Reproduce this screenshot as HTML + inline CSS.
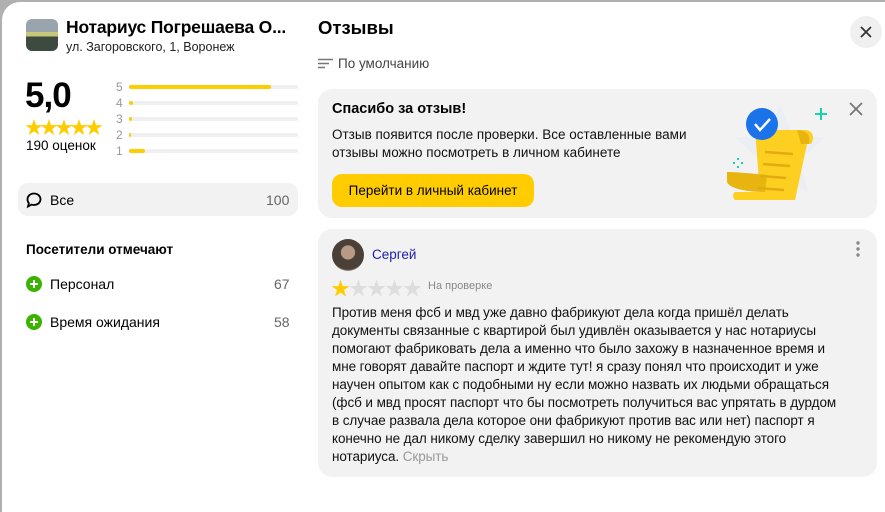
<!DOCTYPE html>
<html><head><meta charset="utf-8"><style>
*{margin:0;padding:0;box-sizing:border-box}
body{width:885px;height:501px;overflow:hidden;background:#b0b0b0;font-family:"Liberation Sans","Noto Sans CJK SC",sans-serif;color:#000;position:relative}
.panel{position:absolute;left:2px;top:2px;width:890px;height:510px;background:#fff;border-top-left-radius:18px}
.a{position:absolute;white-space:nowrap}
.bar{position:absolute;left:129px;width:169px;height:4px;border-radius:2px;background:#f0f0f0}
.bar i{display:block;height:4px;border-radius:2px;background:#fc0}
.dg{position:absolute;left:116px;font-size:12px;color:#999}
.card{position:absolute;left:318px;width:559px;background:#f2f2f2;border-radius:14px}
.plus{position:absolute;left:26px;width:16px;height:16px;border-radius:50%;background:#3bb300}
.plus:before{content:"";position:absolute;left:4px;top:7px;width:8px;height:2px;background:#fff}
.plus:after{content:"";position:absolute;left:7px;top:4px;width:2px;height:8px;background:#fff}
.rv{font-size:13.5px;line-height:18px;letter-spacing:-0.08px;color:#111}
</style></head><body>
<div class="panel"></div>
<div class="a" style="left:26px;top:19px;width:32px;height:32px;border-radius:6px;background:linear-gradient(180deg,#9aa4ad 0 40%,#c8c878 40% 55%,#3d4a40 55% 100%)"></div>
<div class="a" style="left:66px;top:17px;font-size:17.5px;font-weight:bold;letter-spacing:-0.2px">Нотариус Погрешаева О...</div>
<div class="a" style="left:66px;top:40px;font-size:12.5px;color:#222">ул. Загоровского, 1, Воронеж</div>
<div class="a" style="left:25px;top:76px;font-size:35px;font-weight:bold;letter-spacing:-1px">5,0</div>
<div class="a" style="left:25px;top:114px;font-size:18px;color:#fc0;letter-spacing:-3px">★★★★★</div>
<div class="a" style="left:26px;top:138px;font-size:13.5px">190 оценок</div>
<div class="dg" style="top:80px">5</div><div class="bar" style="top:85px"><i style="width:142px"></i></div>
<div class="dg" style="top:96px">4</div><div class="bar" style="top:101px"><i style="width:4px"></i></div>
<div class="dg" style="top:112px">3</div><div class="bar" style="top:117px"><i style="width:3px"></i></div>
<div class="dg" style="top:128px">2</div><div class="bar" style="top:133px"><i style="width:2px"></i></div>
<div class="dg" style="top:144px">1</div><div class="bar" style="top:149px"><i style="width:16px"></i></div>
<div class="a" style="left:18px;top:183px;width:280px;height:33px;border-radius:10px;background:#f2f2f2"></div>
<svg class="a" style="left:25px;top:191px" width="18" height="18" viewBox="0 0 18 18"><path d="M9 2.5c3.8 0 6.5 2.6 6.5 5.8S12.8 14 9 14c-.9 0-1.700-.1-2.4-.4L3 15.5l.9-3.3C2.9 11.2 2.5 9.8 2.5 8.3 2.5 5.1 5.2 2.5 9 2.5z" fill="none" stroke="#000" stroke-width="1.8"/></svg>
<div class="a" style="left:50px;top:192px;font-size:14px">Все</div>
<div class="a" style="left:266px;top:192px;font-size:14px;color:#666">100</div>
<div class="a" style="left:26px;top:242px;font-size:13.5px;font-weight:bold">Посетители отмечают</div>
<div class="plus" style="top:276px"></div>
<div class="a" style="left:50px;top:276px;font-size:14px">Персонал</div>
<div class="a" style="left:274px;top:276px;font-size:14px;color:#666">67</div>
<div class="plus" style="top:314px"></div>
<div class="a" style="left:50px;top:314px;font-size:14px">Время ожидания</div>
<div class="a" style="left:274px;top:314px;font-size:14px;color:#666">58</div>

<div class="a" style="left:318px;top:17px;font-size:18.5px;font-weight:bold">Отзывы</div>
<div class="a" style="left:850px;top:16px;width:32px;height:32px;border-radius:50%;background:#f0f0f0"></div>
<svg class="a" style="left:859px;top:25px" width="14" height="14"><path d="M2 2L12 12M12 2L2 12" stroke="#333" stroke-width="1.8"/></svg>
<svg class="a" style="left:318px;top:58px" width="16" height="12"><path d="M0 1.5h15M0 5.5h11M0 9.5h7" stroke="#777" stroke-width="1.6"/></svg>
<div class="a" style="left:338px;top:56px;font-size:13.5px;color:#444">По умолчанию</div>

<div class="card" style="top:89px;height:129px"></div>
<div class="a" style="left:332px;top:101px;font-size:14.5px;font-weight:bold">Спасибо за отзыв!</div>
<div class="a" style="left:332px;top:126px;font-size:13.5px;line-height:18px;color:#111">Отзыв появится после проверки. Все оставленные вами<br>отзывы можно посмотреть в личном кабинете</div>
<div class="a" style="left:332px;top:174px;width:202px;height:33px;border-radius:10px;background:#fc0;font-size:13.5px;line-height:33px;text-align:center;font-weight:500">Перейти в личный кабинет</div>
<svg class="a" style="left:849px;top:102px" width="14" height="14"><path d="M1 1L13 13M13 1L1 13" stroke="#777" stroke-width="1.8"/></svg>
<svg class="a" style="left:725px;top:100px" width="110" height="110" viewBox="0 0 110 110">
<path d="M55 5l12 30 33 3-25 22 8 33-28-17-28 17 8-33-25-22 33-3z" fill="#e8edf2" opacity=".7"/>
<path d="M30 30h50c8 0 10 8 6 14l-4 0-12 56H10c-2-2-3-6 0-8l25 0z" fill="#fccf21"/>
<path d="M72 30c10 0 14 6 12 14h-8z" fill="#e8b40f"/>
<path d="M2 72c10 0 30 2 40 3l-2 17c-20 0-36-4-38-10z" fill="#e8b40f"/>
<path d="M40 52l28 2M38 64l27 2M35 76l26 2M32 88l27 2" stroke="#e2ac10" stroke-width="2.5"/>
<circle cx="37" cy="24" r="16" fill="#1a73e8"/>
<path d="M30 24l5 6 10-11" fill="none" stroke="#fff" stroke-width="2.5"/>
<path d="M96 8v12M90 14h12" stroke="#19d3b0" stroke-width="2"/>
<path d="M13 58v2M13 66v2M8 63h2M16 63h2" stroke="#19d3b0" stroke-width="2"/>
</svg>

<div class="card" style="top:229px;height:248px"></div>
<div class="a" style="left:332px;top:239px;width:32px;height:32px;border-radius:50%;background:radial-gradient(circle at 50% 42%,#b89a86 0 28%,#4a4038 30% 70%,#8a8078 72%)"></div>
<div class="a" style="left:372px;top:247px;font-size:13.5px;color:#1d1dac">Сергей</div>
<svg class="a" style="left:855px;top:240px" width="6" height="18"><circle cx="3" cy="3" r="1.7" fill="#888"/><circle cx="3" cy="9" r="1.7" fill="#888"/><circle cx="3" cy="15" r="1.7" fill="#888"/></svg>
<div class="a" style="left:331px;top:274px;font-size:19px;letter-spacing:-1px;color:#ddd"><span style="color:#fc0">★</span>★★★★</div>
<div class="a" style="left:428px;top:280px;font-size:11px;color:#888">На проверке</div>
<div class="a rv" style="left:332px;top:304px">Против меня фсб и мвд уже давно фабрикуют дела когда пришёл делать<br>документы связанные с квартирой был удивлён оказывается у нас нотариусы<br>помогают фабриковать дела а именно что было захожу в назначенное время и<br>мне говорят давайте паспорт и ждите тут! я сразу понял что происходит и уже<br>научен опытом как с подобными ну если можно назвать их людьми обращаться<br>(фсб и мвд просят паспорт что бы посмотреть получиться вас упрятать в дурдом<br>в случае развала дела которое они фабрикуют против вас или нет) паспорт я<br>конечно не дал никому сделку завершил но никому не рекомендую этого<br>нотариуса. <span style="color:#999">Скрыть</span></div>
</body></html>
